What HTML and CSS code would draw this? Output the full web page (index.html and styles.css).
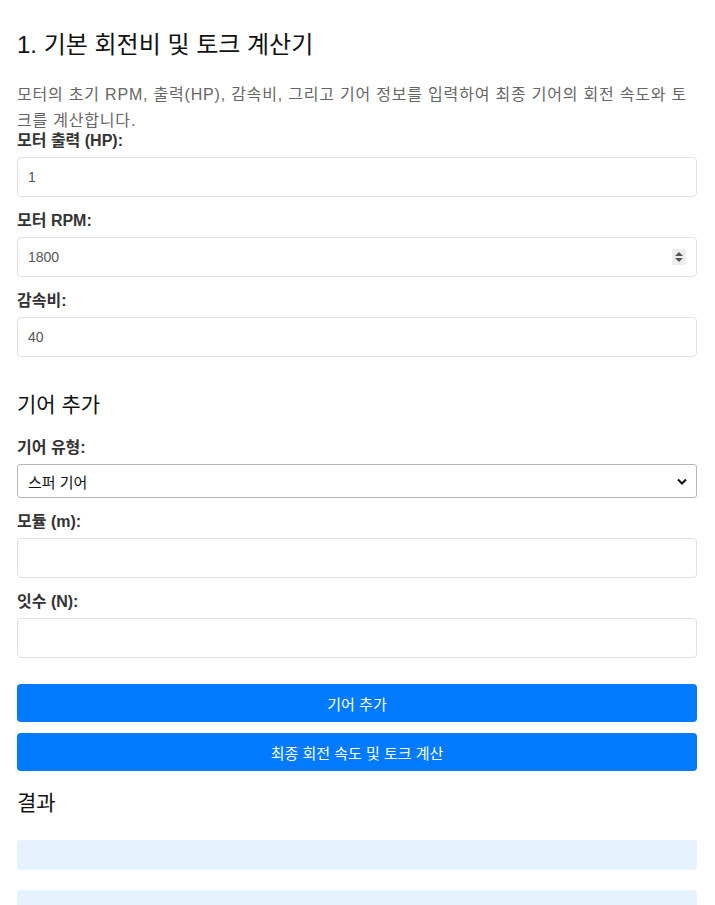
FILE: index.html
```html
<!DOCTYPE html>
<html lang="ko">
<head>
<meta charset="utf-8">
<title>기본 회전비 및 토크 계산기</title>
<link rel="stylesheet" href="styles.css">
</head>
<body>
<div class="container">
  <h1 class="title">1. 기본 회전비 및 토크 계산기</h1>
  <p class="desc">모터의 초기 RPM, 출력(HP), 감속비, 그리고 기어 정보를 입력하여 최종 기어의 회전 속도와 토크를 계산합니다.</p>

  <div class="field">
    <label class="label">모터 출력 (HP):</label>
    <input class="input" type="text" value="1">
  </div>
  <div class="field">
    <label class="label">모터 RPM:</label>
    <div class="input-wrap">
      <input class="input" type="text" value="1800">
      <span class="spinner"><span class="up"></span><span class="down"></span></span>
    </div>
  </div>
  <div class="field">
    <label class="label">감속비:</label>
    <input class="input" type="text" value="40">
  </div>

  <h2 class="section">기어 추가</h2>
  <div class="field">
    <label class="label">기어 유형:</label>
    <div class="select">
      <span>스퍼 기어</span>
      <svg class="chev" width="10" height="7" viewBox="0 0 10 7"><path d="M1 1.5 L5 5.5 L9 1.5" fill="none" stroke="#111" stroke-width="2"/></svg>
    </div>
  </div>
  <div class="field">
    <label class="label">모듈 (m):</label>
    <input class="input" type="text" value="">
  </div>
  <div class="field">
    <label class="label">잇수 (N):</label>
    <input class="input" type="text" value="">
  </div>

  <div class="buttons">
    <button class="btn">기어 추가</button>
    <button class="btn">최종 회전 속도 및 토크 계산</button>
  </div>

  <h2 class="section result-title">결과</h2>
  <div class="result"></div>
  <div class="result"></div>
</div>
</body>
</html>
```
FILE: styles.css
```css
* { box-sizing: border-box; }
html, body { margin: 0; padding: 0; background: #fff; }
body {
  font-family: "Liberation Sans", "Noto Sans CJK KR", sans-serif;
  color: #222;
}
.container {
  padding: 0 18px 0 17px;
}
.title {
  font-size: 24px;
  line-height: 30px;
  font-weight: 400;
  color: #111;
  margin: 30px 0 22px;
}
.desc {
  font-size: 16px;
  line-height: 26px;
  letter-spacing: 0.8px;
  color: #666;
  margin: 0 0 -3px;
}
.field {
  display: flex;
  flex-direction: column;
  margin-bottom: 14px;
}
.label {
  font-size: 16px;
  line-height: 20px;
  font-weight: 700;
  color: #333;
  margin-bottom: 6px;
}
.input-wrap { position: relative; }
.input {
  width: 100%;
  height: 40px;
  border: 1px solid #e1e1e1;
  border-radius: 4px;
  padding: 0 10px;
  font-family: "Liberation Sans", "Noto Sans CJK KR", sans-serif;
  font-size: 14px;
  color: #555;
  background: #fff;
  outline: none;
}
.spinner {
  position: absolute;
  right: 11px;
  top: 12px;
  width: 14px;
  height: 16px;
  background: #eee;
  display: flex;
  flex-direction: column;
  align-items: center;
  justify-content: center;
  gap: 2px;
}
.spinner .up {
  width: 0; height: 0;
  border-left: 4px solid transparent;
  border-right: 4px solid transparent;
  border-bottom: 4px solid #555;
}
.spinner .down {
  width: 0; height: 0;
  border-left: 4px solid transparent;
  border-right: 4px solid transparent;
  border-top: 4px solid #555;
}
.section {
  font-size: 21px;
  line-height: 28px;
  font-weight: 400;
  color: #111;
  margin: 34px 0 19px;
}
.select {
  height: 34px;
  border: 1px solid #b5b5b5;
  border-radius: 3px;
  padding: 0 9px 0 10px;
  display: flex;
  align-items: center;
  justify-content: space-between;
  font-size: 15px;
  color: #111;
}
.buttons {
  display: flex;
  flex-direction: column;
  gap: 11px;
  margin-top: 26px;
}
.btn {
  height: 38px;
  width: 100%;
  border: none;
  border-radius: 4px;
  background: #007bff;
  color: #fff;
  font-family: "Liberation Sans", "Noto Sans CJK KR", sans-serif;
  font-size: 15px;
  cursor: pointer;
}
.result-title {
  margin: 18px 0 23px;
}
.result {
  height: 30px;
  background: #e6f3ff;
  border-radius: 4px;
  margin-bottom: 20px;
}
```
